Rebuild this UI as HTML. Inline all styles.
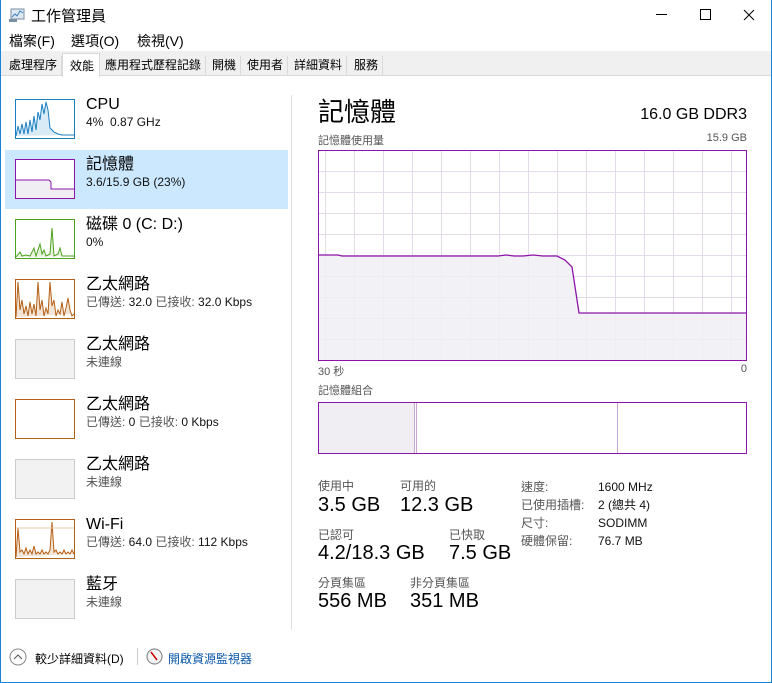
<!DOCTYPE html>
<html><head><meta charset="utf-8"><style>
*{margin:0;padding:0;box-sizing:border-box}
body{width:772px;height:683px;position:relative;background:#fff;font-family:"Liberation Sans","Noto Sans CJK TC",sans-serif;color:#000;overflow:hidden}
.a{position:absolute;white-space:nowrap}
.th{position:absolute;left:15px;width:60px;height:40px;border:1px solid #888;background:#fff}
.t1{position:absolute;left:86px;font-size:16px;line-height:18px}
.t2{position:absolute;left:86px;font-size:12px;line-height:14px;color:#555}
.t2 b{font-weight:normal;color:#111}
.lbl{font-size:12px;color:#555}
.big{font-size:20px;color:#000;line-height:22px}
.tab{position:absolute;top:56px;height:20px;font-size:12px;line-height:19px;padding:0 4px;border-right:1px solid #d9d9d9;color:#000}
</style></head><body>
<div class="a" style="left:0;top:0;width:1px;height:683px;background:#1883d7"></div>
<div class="a" style="right:0;top:0;width:1px;height:683px;background:#1883d7"></div>
<div class="a" style="left:0;bottom:0;width:772px;height:1px;background:#1883d7"></div>
<svg class="a" style="left:9px;top:8px" width="16" height="14"><rect x="2" y="1" width="13" height="10" fill="#dfe8f0" stroke="#7a8ea5"/><polyline points="3,9 6,6 8,8 11,3 14,5" fill="none" stroke="#3b7ec2"/><rect x="0" y="11" width="8" height="3" fill="#7a8ea5"/></svg>
<div class="a" style="left:31px;top:5px;font-size:15px">工作管理員</div>
<div class="a" style="left:656px;top:14px;width:11px;height:1px;background:#000"></div>
<div class="a" style="left:700px;top:9px;width:11px;height:11px;border:1px solid #000"></div>
<svg class="a" style="left:743px;top:9px" width="12" height="12"><path d="M1 1L11 11M11 1L1 11" stroke="#000" stroke-width="1"/></svg>
<div class="a" style="left:9px;top:31px;font-size:14px">檔案(F)</div>
<div class="a" style="left:71px;top:31px;font-size:14px">選項(O)</div>
<div class="a" style="left:137px;top:31px;font-size:14px">檢視(V)</div>
<div class="a" style="left:1px;top:51px;width:770px;height:25px;background:#f0f0f0;border-bottom:1px solid #d9d9d9"></div>
<div class="tab" style="left:5px">處理程序</div>
<div class="a" style="left:62px;top:53px;width:38px;height:24px;background:#fff;border:1px solid #d9d9d9;border-bottom:none;font-size:12px;padding:3px 0 0 7px">效能</div>
<div class="tab" style="left:101px">應用程式歷程記錄</div>
<div class="tab" style="left:208px">開機</div>
<div class="tab" style="left:243px">使用者</div>
<div class="tab" style="left:290px">詳細資料</div>
<div class="tab" style="left:350px">服務</div>
<div class="a" style="left:5px;top:150px;width:283px;height:59px;background:#cce8ff"></div>
<div class="a" style="left:291px;top:95px;width:1px;height:535px;background:#e0e0e0"></div>
<div class="th" style="top:99px;border-color:#1a7fc1"><svg width="58" height="38"><polyline points="0,36 2,26 4,34 6,24 8,34 10,22 12,34 14,20 16,32 18,16 20,30 22,12 24,20 26,4 28,14 30,2 32,10 34,28 38,32 42,34 46,35 58,35" fill="#d9ebf7" stroke="#1a7fc1"/></svg></div>
<div class="t1" style="top:96px">CPU</div>
<div class="t2" style="top:115px;color:#111">4%&nbsp; 0.87 GHz</div>
<div class="th" style="top:159px;border-color:#8b14a8"><svg width="58" height="38"><path d="M0 20H33Q35 20 35 23V29H58V38H0Z" fill="#f0eef2"/><polyline points="0,20 33,20 35,22 35,29 58,29" fill="none" stroke="#8b14a8"/></svg></div>
<div class="t1" style="top:156px">記憶體</div>
<div class="t2" style="top:175px;color:#111">3.6/15.9 GB (23%)</div>
<div class="th" style="top:219px;border-color:#4da31f"><svg width="58" height="38"><polyline points="0,37 4,32 6,36 10,35 14,36 18,28 20,36 24,24 26,34 28,30 30,36 34,34 36,8 38,36 42,34 44,28 46,36 58,36" fill="#e6f2dc" stroke="#4da31f"/></svg></div>
<div class="t1" style="top:216px">磁碟 0 (C: D:)</div>
<div class="t2" style="top:235px;color:#111">0%</div>
<div class="th" style="top:279px;border-color:#b45f14"><svg width="58" height="38"><polyline points="0,37 2,2 4,30 6,20 8,34 10,26 12,36 14,22 16,34 18,24 20,36 22,2 24,30 26,20 28,36 30,28 32,34 34,2 36,26 38,20 40,36 42,30 44,34 46,22 48,36 50,28 52,18 54,30 56,36 58,34" fill="#f3e4d6" stroke="#b45f14"/></svg></div>
<div class="t1" style="top:276px">乙太網路</div>
<div class="t2" style="top:295px">已傳送: <b>32.0</b> 已接收: <b>32.0 Kbps</b></div>
<div class="th" style="top:339px;border-color:#ccc;background:#f2f2f2"></div>
<div class="t1" style="top:336px">乙太網路</div>
<div class="t2" style="top:355px">未連線</div>
<div class="th" style="top:399px;border-color:#b45f14"></div>
<div class="t1" style="top:396px">乙太網路</div>
<div class="t2" style="top:415px">已傳送: <b>0</b> 已接收: <b>0 Kbps</b></div>
<div class="th" style="top:459px;border-color:#ccc;background:#f2f2f2"></div>
<div class="t1" style="top:456px">乙太網路</div>
<div class="t2" style="top:475px">未連線</div>
<div class="th" style="top:519px;border-color:#b45f14"><svg width="58" height="38"><polyline points="0,37 2,8 4,32 6,30 8,34 10,28 12,34 14,30 16,34 18,26 20,34 22,32 24,34 26,30 28,34 30,32 32,34 34,30 36,2 38,32 40,30 42,34 44,32 46,34 48,30 50,34 52,32 54,34 56,30 58,34" fill="#f3e4d6" stroke="#b45f14"/><line x1="0" y1="8" x2="58" y2="8" stroke="#e8c8a8"/></svg></div>
<div class="t1" style="top:516px">Wi-Fi</div>
<div class="t2" style="top:535px">已傳送: <b>64.0</b> 已接收: <b>112 Kbps</b></div>
<div class="th" style="top:579px;border-color:#ccc;background:#f2f2f2"></div>
<div class="t1" style="top:576px">藍牙</div>
<div class="t2" style="top:595px">未連線</div>
<div class="a" style="left:318px;top:92px;font-size:26px">記憶體</div>
<div class="a" style="right:25px;top:106px;font-size:16px">16.0 GB DDR3</div>
<div class="a lbl" style="left:318px;top:132px;font-size:11px">記憶體使用量</div>
<div class="a lbl" style="right:25px;top:132px;font-size:11px">15.9 GB</div>
<svg class="a" style="left:318px;top:150px" width="429" height="211">
<g stroke="#e3dce8" stroke-width="1">
<path d="M7.5 0V211M36.5 0V211M65.5 0V211M94.5 0V211M123.5 0V211M152.5 0V211M181.5 0V211M210.5 0V211M239.5 0V211M268.5 0V211M297.5 0V211M326.5 0V211M355.5 0V211M384.5 0V211M413.5 0V211"/>
<path d="M0 21.5H429M0 42.5H429M0 63.5H429M0 84.5H429M0 105.5H429M0 126.5H429M0 147.5H429M0 168.5H429M0 189.5H429"/>
</g>
<path d="M0 105L20 105L24 106L180 106L188 105L196 106L205 106L215 105L225 106L239 106L247 110L254 117L261 163L429 163L429 211L0 211Z" fill="#f0eef3" fill-opacity="0.85"/>
<polyline points="0,105 20,105 24,106 180,106 188,105 196,106 205,106 215,105 225,106 239,106 247,110 254,117 261,163 429,163" fill="none" stroke="#8b14a8" stroke-width="1.3"/>
<rect x="0.5" y="0.5" width="428" height="210" fill="none" stroke="#8b14a8"/>
</svg>
<div class="a lbl" style="left:318px;top:363px;font-size:11px">30 秒</div>
<div class="a lbl" style="right:25px;top:363px;font-size:11px">0</div>
<div class="a lbl" style="left:318px;top:382px;font-size:11px">記憶體組合</div>
<svg class="a" style="left:318px;top:402px" width="429" height="52">
<rect x="1" y="1" width="96" height="50" fill="#f0eef3"/>
<path d="M96.5 1V51M98.5 1V51M299.5 1V51" stroke="#c9a6d6"/>
<rect x="0.5" y="0.5" width="428" height="51" fill="none" stroke="#8b14a8"/>
</svg>
<div class="a lbl" style="left:318px;top:477px">使用中</div>
<div class="a big" style="left:318px;top:494px">3.5 GB</div>
<div class="a lbl" style="left:400px;top:477px">可用的</div>
<div class="a big" style="left:400px;top:494px">12.3 GB</div>
<div class="a lbl" style="left:318px;top:526px">已認可</div>
<div class="a big" style="left:318px;top:542px">4.2/18.3 GB</div>
<div class="a lbl" style="left:449px;top:526px">已快取</div>
<div class="a big" style="left:449px;top:542px">7.5 GB</div>
<div class="a lbl" style="left:318px;top:574px">分頁集區</div>
<div class="a big" style="left:318px;top:590px">556 MB</div>
<div class="a lbl" style="left:410px;top:574px">非分頁集區</div>
<div class="a big" style="left:410px;top:590px">351 MB</div>
<div class="a lbl" style="left:521px;top:478px;line-height:18px">速度:<br>已使用插槽:<br>尺寸:<br>硬體保留:</div>
<div class="a" style="left:598px;top:478px;line-height:18px;font-size:12px;color:#111">1600 MHz<br>2 (總共 4)<br>SODIMM<br>76.7 MB</div>
<svg class="a" style="left:9px;top:648px" width="18" height="18"><circle cx="9" cy="9" r="8" fill="none" stroke="#888"/><path d="M5 11L9 7L13 11" fill="none" stroke="#555"/></svg>
<div class="a" style="left:35px;top:650px;font-size:12px">較少詳細資料(D)</div>
<div class="a" style="left:137px;top:648px;width:1px;height:17px;background:#ccc"></div>
<svg class="a" style="left:146px;top:648px" width="17" height="17"><circle cx="8.5" cy="8.5" r="7.5" fill="#f4f4f4" stroke="#777"/><path d="M5 4L11 12" stroke="#c00" stroke-width="1.5"/></svg>
<div class="a" style="left:168px;top:650px;font-size:12px;color:#0b57a8">開啟資源監視器</div>
</body></html>
